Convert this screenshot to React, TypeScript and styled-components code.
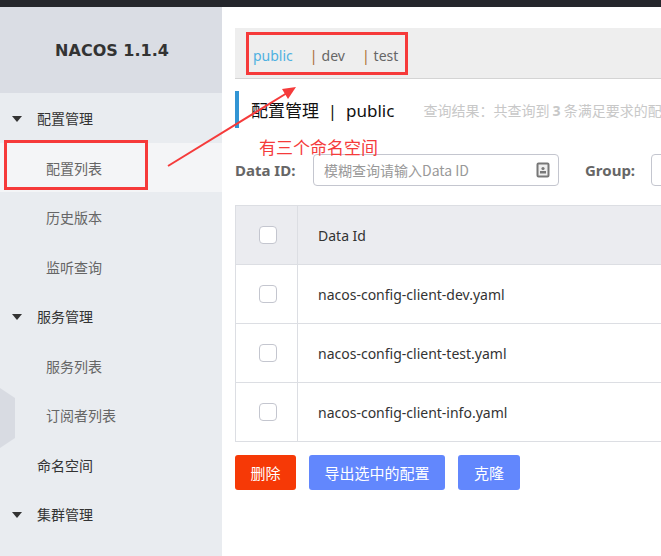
import React from "react";
import styled, { createGlobalStyle } from "styled-components";

const GlobalStyle = createGlobalStyle`
  html, body { margin: 0; padding: 0; }
  body {
    font-family: "Noto Sans", "Noto Sans CJK SC", sans-serif;
    background: #ffffff;
    overflow: hidden;
  }
`;

const Page = styled.div`
  position: relative;
  width: 661px;
  height: 556px;
  overflow: hidden;
  display: flex;
  flex-direction: column;
`;

const TopBar = styled.div`
  height: 7px;
  background: #25272c;
  flex-shrink: 0;
`;

const Body = styled.div`
  flex: 1;
  display: flex;
  min-height: 0;
`;

const Sidebar = styled.aside`
  position: relative;
  width: 222px;
  flex-shrink: 0;
  background: #e9ecf0;
  display: flex;
  flex-direction: column;
`;

const Logo = styled.div`
  height: 86.25px;
  background: #dadde4;
  display: flex;
  align-items: center;
  justify-content: center;
  font-family: "DejaVu Sans", sans-serif;
  font-weight: bold;
  font-size: 16px;
  color: #333;
  padding-left: 2px;
`;

const MenuItem = styled.div<{ $level: number; $active?: boolean }>`
  height: 49.5px;
  display: flex;
  align-items: center;
  padding-left: ${(p) => (p.$level === 2 ? 46 : 12)}px;
  background: ${(p) => (p.$active ? "#f4f5f7" : "transparent")};
  color: ${(p) => (p.$level === 2 ? "#666" : "#333")};
  font-size: 14px;
  font-family: "Noto Sans CJK SC", sans-serif;
`;

const Caret = styled.span<{ $hidden?: boolean }>`
  width: 0;
  height: 0;
  border-left: 5px solid transparent;
  border-right: 5px solid transparent;
  border-top: 6px solid ${(p) => (p.$hidden ? "transparent" : "#333")};
  margin-right: 15px;
  margin-top: 1px;
`;

const Toggle = styled.svg`
  position: absolute;
  left: 0;
  top: 381px;
`;

const Main = styled.main`
  position: relative;
  flex: 1;
  min-width: 0;
  background: #fff;
  padding: 21px 0 0 13px;
  display: flex;
  flex-direction: column;
`;

const NsBar = styled.div`
  height: 50px;
  width: 600px;
  background: #eeeeee;
  border-bottom: 1px solid #d4d4d4;
  display: flex;
  align-items: center;
  padding-left: 18px;
  font-size: 14px;
`;

const NsItem = styled.span<{ $active?: boolean }>`
  color: ${(p) => (p.$active ? "#4fb1e1" : "#666")};
  margin-right: 17px;
  display: flex;
  align-items: center;
  margin-top: 4px;
`;

const NsSep = styled.span`
  color: #a86a2e;
  margin-right: 4px;
`;

const TitleRow = styled.div`
  margin-top: 12px;
  height: 37px;
  display: flex;
  align-items: center;
  border-left: 4px solid #3295d4;
  padding-left: 12px;
  width: 600px;
`;

const Title = styled.span`
  font-size: 17px;
  color: #111;
  font-family: "Noto Sans", "Noto Sans CJK SC", sans-serif;
  white-space: pre;
`;

const QueryInfo = styled.span`
  margin-left: 29px;
  font-size: 14px;
  color: #c8c8c8;
  white-space: nowrap;
  font-family: "Noto Sans CJK SC", sans-serif;
  b { font-family: "Noto Sans", sans-serif; font-weight: bold; }
`;

const SearchRow = styled.div`
  margin-top: 26px;
  display: flex;
  align-items: center;
  height: 32px;
`;

const Label = styled.label<{ $gap?: number }>`
  font-size: 15px;
  font-weight: bold;
  color: #666;
  margin-left: ${(p) => p.$gap ?? 0}px;
  white-space: nowrap;
  width: ${(p) => (p.$gap ? 66 : 78)}px;
  flex-shrink: 0;
`;

const InputBox = styled.div<{ $w: number }>`
  width: ${(p) => p.$w}px;
  height: 32px;
  box-sizing: border-box;
  border: 1px solid #c4c6cf;
  border-radius: 4px;
  display: flex;
  align-items: center;
  padding: 0 8px 0 10px;
  flex-shrink: 0;
`;

const Placeholder = styled.span`
  flex: 1;
  color: #999;
  font-size: 14px;
  font-family: "Noto Sans CJK SC", sans-serif;
  white-space: nowrap;
`;

const Table = styled.div`
  margin-top: 19px;
  width: 600px;
  border: 1px solid #dcdee3;
  border-right: none;
  display: flex;
  flex-direction: column;
`;

const Row = styled.div<{ $head?: boolean }>`
  height: 58px;
  display: flex;
  background: ${(p) => (p.$head ? "#ebecf0" : "#fff")};
  & + & { border-top: 1px solid #dcdee3; }
`;

const CheckCell = styled.div`
  width: 61px;
  border-right: 1px solid #dcdee3;
  display: flex;
  align-items: center;
  justify-content: center;
`;

const Checkbox = styled.span`
  width: 18px;
  height: 18px;
  box-sizing: border-box;
  border: 1px solid #c4c6cf;
  border-radius: 4px;
  background: #fff;
  margin-left: 2px;
`;

const TextCell = styled.div`
  flex: 1;
  display: flex;
  align-items: center;
  padding-left: 20px;
  font-size: 14px;
  color: #333;
`;

const Actions = styled.div`
  margin-top: 13px;
  display: flex;
  gap: 13px;
`;

const Button = styled.button<{ $danger?: boolean; $w: number }>`
  height: 35px;
  width: ${(p) => p.$w}px;
  border: none;
  border-radius: 3px;
  background: ${(p) => (p.$danger ? "#f63906" : "#6287fd")};
  color: #fff;
  font-size: 15px;
  font-family: "Noto Sans CJK SC", sans-serif;
  padding: 0;
  display: flex;
  align-items: center;
  justify-content: center;
`;

const RedBox = styled.div<{ $x: number; $y: number; $w: number; $h: number }>`
  position: absolute;
  left: ${(p) => p.$x}px;
  top: ${(p) => p.$y}px;
  width: ${(p) => p.$w}px;
  height: ${(p) => p.$h}px;
  box-sizing: border-box;
  border: 3px solid #f63a3a;
  pointer-events: none;
`;

const Note = styled.div`
  position: absolute;
  left: 259px;
  top: 135px;
  font-size: 17px;
  line-height: 24px;
  color: #f53b3b;
  font-family: "Noto Sans CJK SC", sans-serif;
`;

const Arrow = styled.svg`
  position: absolute;
  left: 0;
  top: 0;
  pointer-events: none;
`;

const CardIcon = () => (
  <svg width="14" height="16" viewBox="0 0 14 16">
    <rect x="1.5" y="1.5" width="11" height="13" fill="#eee" stroke="#777" strokeWidth="2" rx="1" />
    <circle cx="7" cy="6.5" r="1.6" fill="#777" />
    <rect x="4" y="9" width="6" height="2.5" fill="#777" />
  </svg>
);

const menu: { label: string; level: number; active?: boolean; caret?: boolean }[] = [
  { label: "配置管理", level: 1, caret: true },
  { label: "配置列表", level: 2, active: true },
  { label: "历史版本", level: 2 },
  { label: "监听查询", level: 2 },
  { label: "服务管理", level: 1, caret: true },
  { label: "服务列表", level: 2 },
  { label: "订阅者列表", level: 2 },
  { label: "命名空间", level: 1, caret: false },
  { label: "集群管理", level: 1, caret: true },
];

const rows = [
  "nacos-config-client-dev.yaml",
  "nacos-config-client-test.yaml",
  "nacos-config-client-info.yaml",
];

export default function App() {
  return (
    <>
      <GlobalStyle />
      <Page>
        <TopBar />
        <Body>
          <Sidebar>
            <Logo>NACOS 1.1.4</Logo>
            {menu.map((m) => (
              <MenuItem key={m.label} $level={m.level} $active={m.active}>
                {m.level === 1 && <Caret $hidden={!m.caret} />}
                {m.label}
              </MenuItem>
            ))}
            <Toggle width="16" height="62" viewBox="0 0 16 62">
              <polygon points="0,0 15,10 15,50 0,60" fill="#d8dbe2" />
            </Toggle>
          </Sidebar>
          <Main>
            <NsBar>
              <NsItem $active>public</NsItem>
              <NsItem>
                <NsSep>|</NsSep>dev
              </NsItem>
              <NsItem>
                <NsSep>|</NsSep>test
              </NsItem>
            </NsBar>
            <TitleRow>
              <Title>{"配置管理  |  public"}</Title>
              <QueryInfo>
                查询结果：共查询到 <b>3</b> 条满足要求的配置。
              </QueryInfo>
            </TitleRow>
            <SearchRow>
              <Label>Data ID:</Label>
              <InputBox $w={246}>
                <Placeholder>模糊查询请输入Data ID</Placeholder>
                <CardIcon />
              </InputBox>
              <Label $gap={26}>Group:</Label>
              <InputBox $w={246}>
                <Placeholder>模糊查询请输入Group</Placeholder>
              </InputBox>
            </SearchRow>
            <Table>
              <Row $head>
                <CheckCell>
                  <Checkbox />
                </CheckCell>
                <TextCell>Data Id</TextCell>
              </Row>
              {rows.map((r) => (
                <Row key={r}>
                  <CheckCell>
                    <Checkbox />
                  </CheckCell>
                  <TextCell>{r}</TextCell>
                </Row>
              ))}
            </Table>
            <Actions>
              <Button $danger $w={61}>删除</Button>
              <Button $w={136}>导出选中的配置</Button>
              <Button $w={62}>克隆</Button>
            </Actions>
          </Main>
        </Body>
        <RedBox $x={246} $y={32} $w={162} $h={43} />
        <RedBox $x={4} $y={140} $w={144} $h={50} />
        <Note>有三个命名空间</Note>
        <Arrow width="661" height="556" viewBox="0 0 661 556">
          <line x1="168" y1="166" x2="287" y2="93" stroke="#f53b3b" strokeWidth="2" />
          <polygon points="296,87 282,89 288,99" fill="#f53b3b" />
        </Arrow>
      </Page>
    </>
  );
}
